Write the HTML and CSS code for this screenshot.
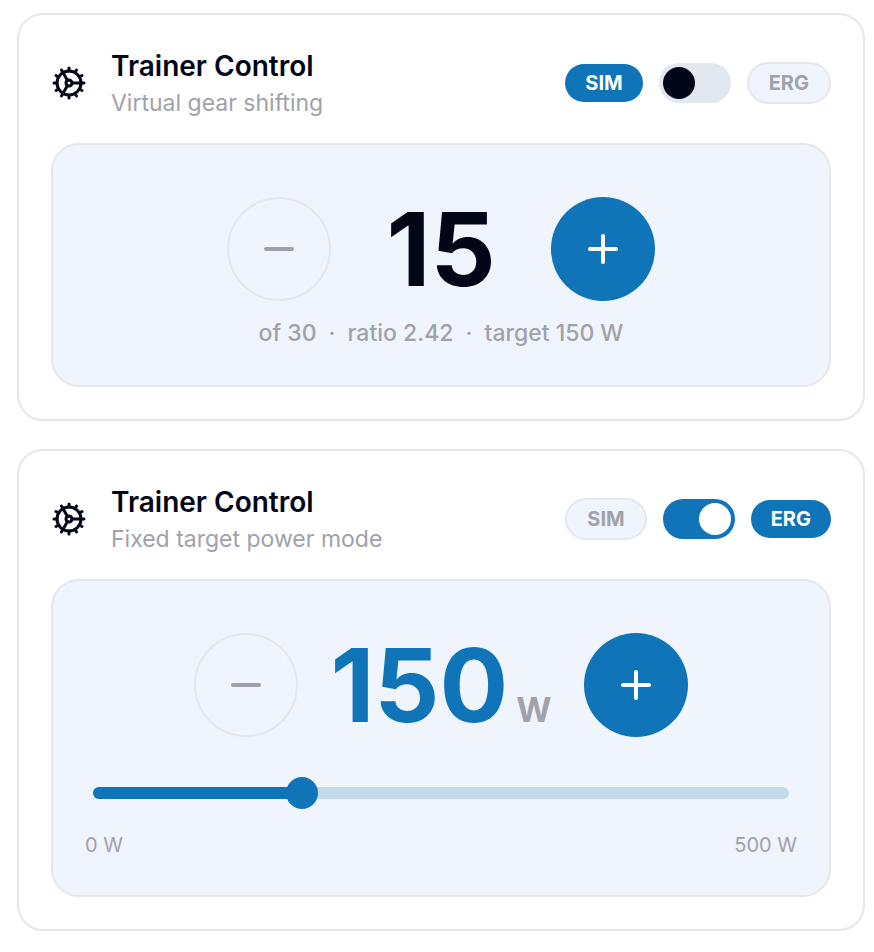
FILE: index.html
```html
<!DOCTYPE html>
<html lang="en">
<head>
    <meta charset="UTF-8">
    <meta name="viewport" content="width=device-width, initial-scale=1.0">
    <title>Trainer Control</title>
    <link rel="stylesheet" href="styles.css">
</head>
<body>

    <!-- Cog icon shared by both cards -->
    <svg class="sprite" aria-hidden="true">
        <symbol id="cog" viewBox="0 0 24 24">
            <circle cx="12" cy="12" r="8"/>
            <circle cx="12" cy="12" r="2"/>
            <path d="M12 2v2M12 22v-2M17 20.66l-1-1.73M11 10.27 7 3.34M20.66 17l-1.73-1M3.34 7l1.73 1M14 12h8M2 12h2M20.66 7l-1.73 1M3.34 17l1.73-1M17 3.34l-1 1.73M11 13.73l-4 6.93"/>
        </symbol>
    </svg>

    <main class="page">

        <!-- SIM mode -->
        <section class="card">
            <header class="card-header">
                <svg class="cog" aria-hidden="true"><use href="#cog"/></svg>
                <div class="heading">
                    <h2>Trainer Control</h2>
                    <p>Virtual gear shifting</p>
                </div>
                <div class="modes">
                    <button type="button" class="pill active">SIM</button>
                    <input type="checkbox" class="switch" role="switch" aria-label="ERG mode">
                    <button type="button" class="pill">ERG</button>
                </div>
            </header>
            <div class="panel">
                <div class="stepper">
                    <button type="button" class="round" aria-label="Gear down">
                        <svg viewBox="0 0 32 32"><path d="M3 16h26"/></svg>
                    </button>
                    <div class="value"><span class="number">15</span></div>
                    <button type="button" class="round primary" aria-label="Gear up">
                        <svg viewBox="0 0 32 32"><path d="M3 16h26M16 3v26"/></svg>
                    </button>
                </div>
                <p class="details"><span>of 30</span><span>·</span><span>ratio 2.42</span><span>·</span><span>target 150 W</span></p>
            </div>
        </section>

        <!-- ERG mode -->
        <section class="card">
            <header class="card-header">
                <svg class="cog" aria-hidden="true"><use href="#cog"/></svg>
                <div class="heading">
                    <h2>Trainer Control</h2>
                    <p>Fixed target power mode</p>
                </div>
                <div class="modes">
                    <button type="button" class="pill">SIM</button>
                    <input type="checkbox" class="switch" role="switch" aria-label="ERG mode" checked>
                    <button type="button" class="pill active">ERG</button>
                </div>
            </header>
            <div class="panel">
                <div class="stepper">
                    <button type="button" class="round" aria-label="Less power">
                        <svg viewBox="0 0 32 32"><path d="M3 16h26"/></svg>
                    </button>
                    <div class="value power"><span class="number">150</span><span class="unit">W</span></div>
                    <button type="button" class="round primary" aria-label="More power">
                        <svg viewBox="0 0 32 32"><path d="M3 16h26M16 3v26"/></svg>
                    </button>
                </div>
                <div class="slider">
                    <div class="track"><div class="fill" style="width: 30%"></div></div>
                    <input type="range" min="0" max="500" value="150" aria-label="Target power">
                </div>
                <div class="limits"><span>0 W</span><span>500 W</span></div>
            </div>
        </section>

    </main>

</body>
</html>
```
FILE: styles.css
```css
:root {
    --blue: #1074b8;
    --ink: #020617;
    --muted: #a1a1aa;
    --line: #e4e7ec;
    --surface: #f0f4fc;
}

* {
    box-sizing: border-box;
}

body {
    margin: 0;
    background: #fff;
    color: var(--ink);
    font-family: Inter, "Liberation Sans", sans-serif;
}

h2,
p {
    margin: 0;
}

button {
    font-family: inherit;
    cursor: pointer;
}

.sprite {
    display: none;
}

.page {
    display: flex;
    flex-direction: column;
    gap: 28px;
    padding: 13px 9px 20px 17px;
}

/* Card */
.card {
    padding: 32px;
    border: 2px solid var(--line);
    border-radius: 26px;
}

.card-header {
    display: flex;
    align-items: center;
    gap: 24px;
    margin-bottom: 24px;
}

.cog {
    width: 36px;
    height: 36px;
    fill: none;
    stroke: currentColor;
    stroke-width: 2;
    stroke-linecap: round;
    stroke-linejoin: round;
}

.heading {
    display: flex;
    flex: 1;
    flex-direction: column;
    gap: 4px;
    padding-top: 2px;
}

.heading h2 {
    font-size: 28px;
    font-weight: 600;
    line-height: 34px;
}

.heading p {
    color: var(--muted);
    font-size: 23px;
    line-height: 32px;
}

/* Mode switch */
.modes {
    display: flex;
    align-items: center;
    gap: 16px;
}

.pill {
    padding: 7px 20px;
    border: 2px solid var(--line);
    border-radius: 21px;
    background: var(--surface);
    color: var(--muted);
    font-size: 20px;
    font-weight: 700;
    line-height: 24px;
}

.pill.active {
    border: 0;
    background: var(--blue);
    color: #fff;
}

.switch {
    appearance: none;
    display: flex;
    width: 72px;
    height: 40px;
    margin: 0;
    padding: 4px;
    border-radius: 20px;
    background: #e2e8f0;
    cursor: pointer;
}

.switch::before {
    content: "";
    width: 32px;
    height: 32px;
    border-radius: 50%;
    background: var(--ink);
}

.switch:checked {
    justify-content: flex-end;
    background: var(--blue);
}

.switch:checked::before {
    background: #fff;
}

/* Panel */
.panel {
    padding: 36px 32px;
    border: 2px solid var(--line);
    border-radius: 28px;
    background: var(--surface);
}

.stepper {
    display: flex;
    align-items: center;
    justify-content: center;
    gap: 32px;
    height: 136px;
}

.round {
    display: flex;
    align-items: center;
    justify-content: center;
    width: 104px;
    height: 104px;
    padding: 0;
    border: 2px solid var(--line);
    border-radius: 50%;
    background: none;
    color: var(--muted);
}

.round.primary {
    border: 0;
    background: var(--blue);
    color: #fff;
}

.round svg {
    width: 32px;
    height: 32px;
    stroke: currentColor;
    stroke-width: 4;
    stroke-linecap: round;
}

.value {
    display: flex;
    align-items: baseline;
    justify-content: center;
    gap: 8px;
    min-width: 156px;
}

.number {
    font-size: 102px;
    font-weight: 700;
    line-height: 104px;
}

.power .number {
    color: var(--blue);
}

.unit {
    color: var(--muted);
    font-size: 34px;
    font-weight: 700;
}

.details {
    display: flex;
    justify-content: center;
    gap: 12px;
    color: var(--muted);
    font-size: 23px;
    font-weight: 500;
    line-height: 32px;
}

/* Power slider */
.slider {
    display: grid;
    align-items: center;
    margin: 24px -8px 22px;
}

.track,
.slider input {
    grid-area: 1 / 1;
}

.track {
    height: 12px;
    margin: 0 16px;
    border-radius: 6px;
    background: #c3daea;
    overflow: hidden;
}

.fill {
    height: 100%;
    background: var(--blue);
}

.slider input {
    appearance: none;
    width: 100%;
    height: 32px;
    margin: 0;
    background: none;
    cursor: pointer;
}

.slider input::-webkit-slider-thumb {
    appearance: none;
    width: 32px;
    height: 32px;
    border: 0;
    border-radius: 50%;
    background: var(--blue);
}

.limits {
    display: flex;
    justify-content: space-between;
    color: var(--muted);
    font-size: 20px;
    line-height: 28px;
}
```
